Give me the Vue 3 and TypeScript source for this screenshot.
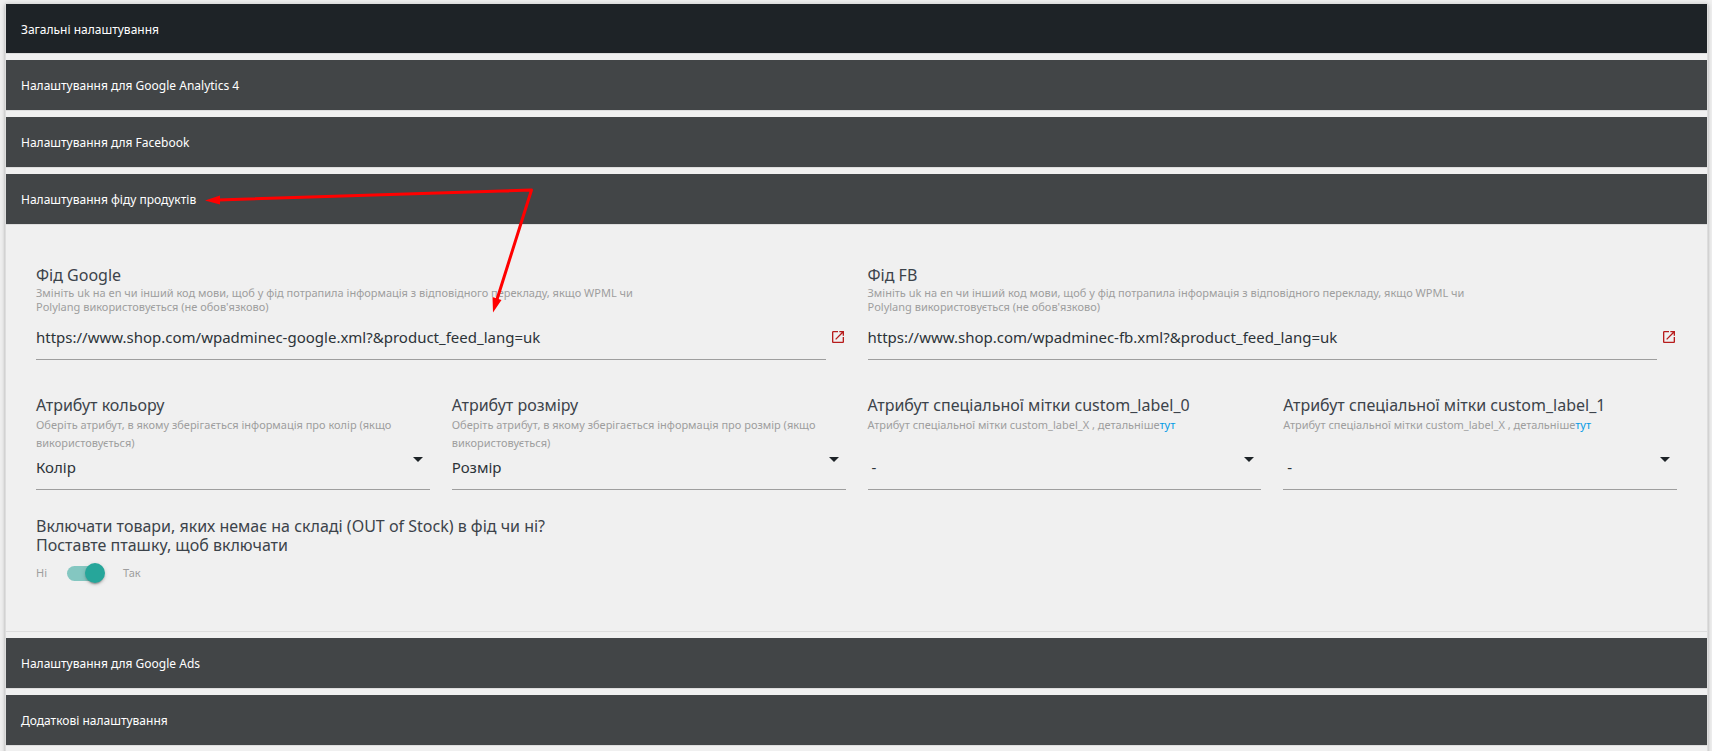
<script setup lang="ts">
import { reactive, ref } from 'vue'

interface Feed {
  id: string
  label: string
  url: string
}

interface Attribute {
  id: string
  label: string
  hint: string
  link?: string
  value: string
}

const topSections = [
  { title: 'Загальні налаштування', active: true },
  { title: 'Налаштування для Google Analytics 4', active: false },
  { title: 'Налаштування для Facebook', active: false },
]
const bottomSections = ['Налаштування для Google Ads', 'Додаткові налаштування']

const feedOpen = ref(true)
const includeOutOfStock = ref(true)

const feedHint =
  "Змініть uk на en чи інший код мови, щоб у фід потрапила інформація з відповідного перекладу, якщо WPML чи Polylang використовується (не обов'язково)"

const feeds = reactive<Feed[]>([
  { id: 'feed-google', label: 'Фід Google', url: 'https://www.shop.com/wpadminec-google.xml?&product_feed_lang=uk' },
  { id: 'feed-fb', label: 'Фід FB', url: 'https://www.shop.com/wpadminec-fb.xml?&product_feed_lang=uk' },
])

const attributes = reactive<Attribute[]>([
  {
    id: 'attr-color',
    label: 'Атрибут кольору',
    hint: 'Оберіть атрибут, в якому зберігається інформація про колір (якщо використовується)',
    value: 'Колір',
  },
  {
    id: 'attr-size',
    label: 'Атрибут розміру',
    hint: 'Оберіть атрибут, в якому зберігається інформація про розмір (якщо використовується)',
    value: 'Розмір',
  },
  {
    id: 'attr-label-0',
    label: 'Атрибут спеціальної мітки custom_label_0',
    hint: 'Атрибут спеціальної мітки custom_label_X , детальніше',
    link: 'тут',
    value: '\u00a0-',
  },
  {
    id: 'attr-label-1',
    label: 'Атрибут спеціальної мітки custom_label_1',
    hint: 'Атрибут спеціальної мітки custom_label_X , детальніше',
    link: 'тут',
    value: '\u00a0-',
  },
])
</script>

<template>
  <main class="page">
    <ul class="sections">
      <li v-for="s in topSections" :key="s.title" class="section">
        <button type="button" class="header" :class="{ active: s.active }">{{ s.title }}</button>
      </li>

      <li class="section">
        <button type="button" class="header" :aria-expanded="feedOpen" @click="feedOpen = !feedOpen">
          Налаштування фіду продуктів
        </button>
        <div v-if="feedOpen" class="body">
          <div class="feeds">
            <div v-for="f in feeds" :key="f.id">
              <label class="label" :for="f.id">{{ f.label }}</label>
              <p class="hint feed-hint">{{ feedHint }}</p>
              <div class="url-row">
                <input :id="f.id" v-model="f.url" class="url" type="text" />
                <a class="open" :href="f.url" target="_blank" :aria-label="f.label">
                  <svg viewBox="0 0 24 24" width="16" height="16" fill="currentColor" aria-hidden="true">
                    <path
                      d="M19 19H5V5h7V3H5c-1.11 0-2 .9-2 2v14c0 1.1.89 2 2 2h14c1.1 0 2-.9 2-2v-7h-2v7zM14 3v2h3.59l-9.83 9.83 1.41 1.41L19 6.41V10h2V3h-7z"
                    />
                  </svg>
                </a>
              </div>
            </div>
          </div>

          <div class="attributes">
            <div v-for="a in attributes" :key="a.id">
              <label class="label" :for="a.id">{{ a.label }}</label>
              <p class="hint attr-hint">{{ a.hint }}<a v-if="a.link" href="#">{{ a.link }}</a></p>
              <div class="select-wrap">
                <select :id="a.id" v-model="a.value" class="select">
                  <option :value="a.value">{{ a.value }}</option>
                </select>
                <svg class="caret" viewBox="0 0 24 24" width="24" height="24" aria-hidden="true">
                  <path d="M7 10l5 5 5-5z" />
                </svg>
              </div>
            </div>
          </div>

          <label class="label stock-label" for="stock">
            Включати товари, яких немає на складі (OUT of Stock) в фід чи ні?<br />Поставте пташку, щоб включати
          </label>
          <div class="switch-row">
            <span>Ні</span>
            <input id="stock" v-model="includeOutOfStock" class="switch" type="checkbox" />
            <span>Так</span>
          </div>
        </div>
      </li>

      <li v-for="title in bottomSections" :key="title" class="section">
        <button type="button" class="header">{{ title }}</button>
      </li>
    </ul>

    <svg class="pointer" width="540" height="320" viewBox="0 0 540 320" aria-hidden="true">
      <path d="M218 200L531.500 190L496.500 301" fill="none" stroke="#f00" stroke-width="3" stroke-linejoin="round" />
      <path d="M205 200.500L220 195.500V204.500ZM493 312.500L492.500 297L501.500 300Z" fill="#f00" />
    </svg>
  </main>
</template>

<style>
body {
  margin: 0;
  background: #f0f0f0;
}
</style>

<style scoped>
.page {
  position: relative;
  box-sizing: border-box;
  height: 100vh;
  padding: 3px 4px 0 5px;
  overflow: hidden;
  font-family: 'Noto Sans', 'Open Sans', sans-serif;
}

.sections {
  box-sizing: border-box;
  min-height: 100%;
  margin: 0;
  padding: 0 0 24px;
  list-style: none;
  display: flex;
  flex-direction: column;
  gap: 6px;
  background: #f0f0f0;
  border: 1px solid #ddd;
  border-top: 1px solid #ddd;
  box-shadow: 0 2px 2px 0 rgba(0, 0, 0, 0.14), 0 3px 1px -2px rgba(0, 0, 0, 0.12), 0 1px 5px 0 rgba(0, 0, 0, 0.2);
}

.header {
  display: block;
  box-sizing: border-box;
  width: 100%;
  height: 51px;
  padding: 2px 15px 0;
  border: 0;
  border-bottom: 1px solid #ddd;
  background: #424547;
  color: #fff;
  font: 12px/20px 'Noto Sans', 'Open Sans', sans-serif;
  text-align: left;
  cursor: pointer;
}

.header.active {
  height: 50px;
  background: #1e2327;
}

.body {
  padding: 40px 30px 48px;
  border-bottom: 1px solid #ddd;
}

.feeds,
.attributes {
  display: grid;
  gap: 22px;
}

.feeds {
  grid-template-columns: repeat(2, minmax(0, 1fr));
}

.attributes {
  grid-template-columns: repeat(4, minmax(0, 1fr));
  margin-top: 35px;
}

.label {
  display: block;
  color: #3c434a;
  font-size: 16px;
  line-height: 20px;
}

.hint {
  margin: 0;
  color: #9e9e9e;
  font-size: 11px;
}

.hint a {
  color: #039be5;
  text-decoration: none;
}

.feed-hint {
  max-width: 640px;
  margin-top: 1px;
  line-height: 14px;
}

.attr-hint {
  min-height: 36px;
  margin-top: 1px;
  line-height: 18px;
}

.url-row {
  display: flex;
  align-items: center;
  gap: 4px;
  margin-top: 2px;
}

.url,
.select {
  box-sizing: border-box;
  width: 100%;
  border: 0;
  border-bottom: 1px solid #9e9e9e;
  border-radius: 0;
  background: transparent;
  color: #2c3338;
  font: 15px/20px 'Noto Sans', 'Open Sans', sans-serif;
  outline: 0;
}

.url {
  flex: 1;
  min-width: 0;
  height: 44px;
  padding: 0 0 2px;
}

.open {
  display: flex;
  padding-bottom: 2px;
  color: #b71c1c;
}

.select-wrap {
  position: relative;
}

.select {
  display: block;
  appearance: none;
  height: 38px;
  padding: 0 24px 8px 0;
}

.caret {
  position: absolute;
  top: -5px;
  right: 0;
  fill: #1d2327;
  pointer-events: none;
}

.stock-label {
  margin-top: 27px;
  line-height: 19px;
}

.switch-row {
  display: flex;
  align-items: center;
  margin-top: 8px;
  color: #9e9e9e;
  font-size: 11px;
  line-height: 20px;
}

.switch {
  position: relative;
  appearance: none;
  width: 36px;
  height: 15px;
  margin: 0 20px;
  border-radius: 15px;
  background: rgba(0, 0, 0, 0.38);
  cursor: pointer;
}

.switch::after {
  content: '';
  position: absolute;
  top: -3px;
  left: -2px;
  width: 20px;
  height: 20px;
  border-radius: 50%;
  background: #fff;
  box-shadow: 0 3px 1px -2px rgba(0, 0, 0, 0.2), 0 2px 2px 0 rgba(0, 0, 0, 0.14), 0 1px 5px 0 rgba(0, 0, 0, 0.12);
}

.switch:checked {
  background: #84c7c1;
}

.switch:checked::after {
  left: 18px;
  background: #26a69a;
}

.pointer {
  position: absolute;
  top: 0;
  left: 0;
  pointer-events: none;
}
</style>
